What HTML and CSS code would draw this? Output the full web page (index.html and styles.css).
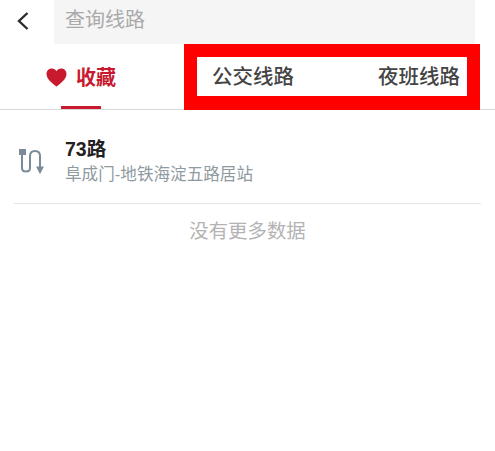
FILE: index.html
```html
<!DOCTYPE html>
<html lang="zh-CN">
<head>
  <meta charset="UTF-8">
  <title>查询线路</title>
  <link rel="stylesheet" href="styles.css">
</head>
<body>
  <div class="search-bar">
    <svg class="back" width="14" height="22" viewBox="0 0 14 22"><path d="M11.5 3 L3 11 L11.500 19" fill="none" stroke="#2b2b2b" stroke-width="2.4"/></svg>
    <div class="search-box">查询线路</div>
  </div>
  <div class="tabs">
    <div class="tab-fav">
      <svg width="21" height="19" viewBox="0 0 22 20"><path d="M11 19.5 C6 15.5 0.5 11.5 0.5 6.2 C0.5 2.8 3 0.5 6 0.5 C8 0.5 10 1.5 11 3.5 C12 1.5 14 0.5 16 0.5 C19 0.5 21.5 2.8 21.5 6.2 C21.500 11.5 16 15.5 11 19.5 Z" fill="#c8192e"/></svg>
      <span>收藏</span>
      <i class="underline"></i>
    </div>
    <div class="tab-box">
      <span>公交线路</span>
      <span>夜班线路</span>
    </div>
  </div>
  <div class="list">
    <div class="route">
      <svg class="route-icon" width="28" height="30" viewBox="0 0 28 30"><path d="M4 6 V21 Q4 24.500 8 24.500 Q12 24.500 12 21 V9 Q12 4 17 4 Q22 4 22 9 V20" fill="none" stroke="#7b8b99" stroke-width="2"/><rect x="1" y="2" width="7" height="6" fill="#7b8b99"/><path d="M18 19.500 H26 L22 27 Z" fill="#7b8b99"/></svg>
      <div>
        <div class="route-name">73路</div>
        <div class="route-desc">阜成门-地铁海淀五路居站</div>
      </div>
    </div>
    <div class="no-more">没有更多数据</div>
  </div>
</body>
</html>
```

FILE: styles.css
```css
body {
  margin: 0;
  background-color: #fff;
  font-family: "Liberation Sans", "Noto Sans CJK SC", sans-serif;
}
.search-bar {
  display: flex;
  height: 45px;
}
.back {
  margin: 10px 0 0 16px;
}
.search-box {
  margin-left: 24px;
  width: 421px;
  height: 44px;
  background-color: #f5f5f6;
  color: #a9a9a9;
  font-size: 20px;
  line-height: 40px;
  padding-left: 11px;
  box-sizing: border-box;
}
.tabs {
  display: flex;
  align-items: flex-start;
  height: 64px;
  border-bottom: 1px solid #d9d9d9;
}
.tab-fav {
  position: relative;
  display: flex;
  align-items: center;
  align-self: stretch;
  width: 184px;
  padding-left: 46px;
  box-sizing: border-box;
  color: #c8192e;
  font-size: 20px;
  font-weight: bold;
  gap: 9px;
}
.tab-fav span {
  margin-bottom: 2px;
}
.underline {
  position: absolute;
  left: 61px;
  bottom: 0;
  width: 40px;
  height: 3px;
  background-color: #c8192e;
}
.tab-box {
  display: flex;
  flex: none;
  justify-content: space-between;
  align-items: center;
  width: 296px;
  height: 66px;
  margin-top: -1px;
  padding: 0 7px 3px 15px;
  box-sizing: border-box;
  border: 13px solid #f00;
  border-bottom-width: 14px;
  color: #444;
  font-size: 20.5px;
  font-weight: 500;
}
.list {
  padding: 0 14px;
}
.route {
  display: flex;
  align-items: flex-start;
  height: 67px;
  padding-top: 26px;
  border-bottom: 1px solid #e4e6e8;
  gap: 19px;
}
.route-icon {
  flex: none;
  margin: 11px 0 0 4px;
}
.route-name {
  color: #222;
  font-size: 19.5px;
  font-weight: bold;
  line-height: 26px;
  margin-bottom: 1px;
}
.route-desc {
  color: #8f9aa1;
  font-size: 16.6px;
  line-height: 24px;
}
.no-more {
  color: #b3b3b3;
  font-size: 19.4px;
  text-align: center;
  margin-top: 13px;
  line-height: 28px;
}
```
